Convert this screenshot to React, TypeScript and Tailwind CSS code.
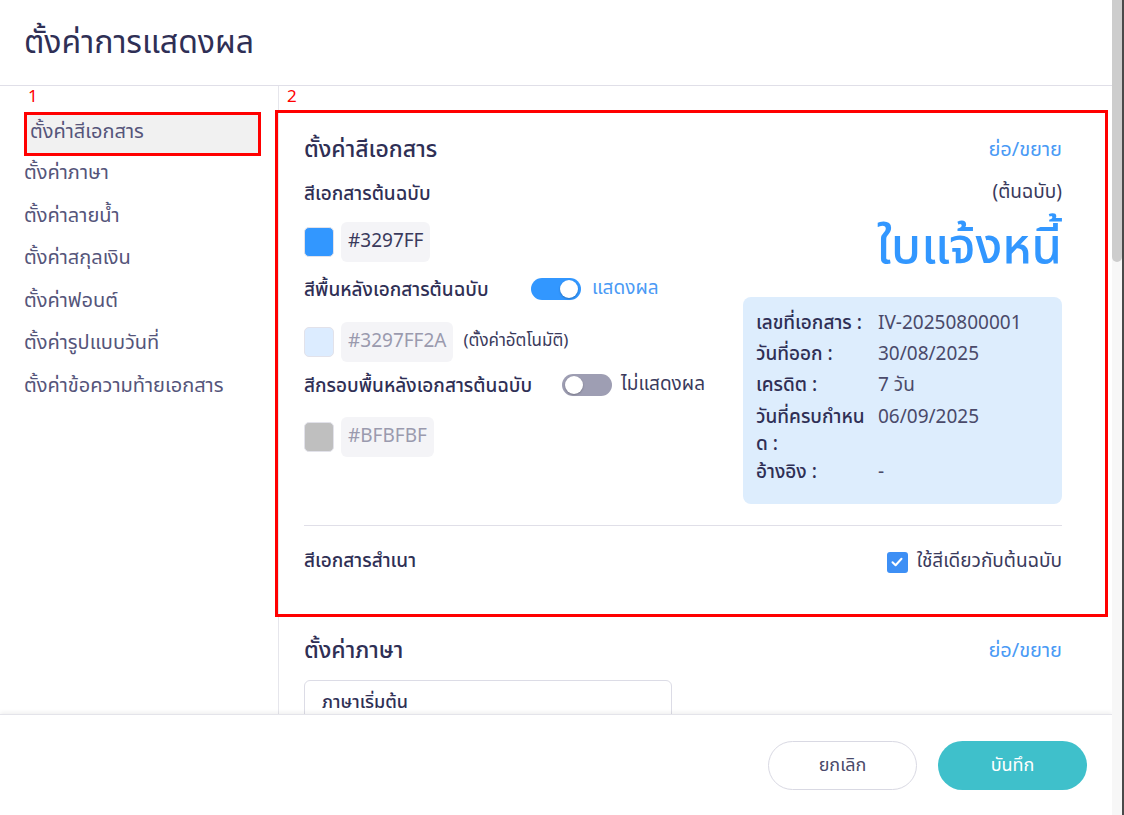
import React from "react";

const font = { fontFamily: '"Noto Sans Thai", "Noto Sans", "Liberation Sans", sans-serif' };

function Toggle({ on }: { on: boolean }) {
  return (
    <div
      className={`relative h-[22px] w-[50px] shrink-0 rounded-full ${on ? "bg-[#3297FF]" : "bg-[#9e9eb3]"}`}
    >
      <div
        className={`absolute top-[2px] h-[18px] w-[18px] rounded-full bg-white shadow-[0_1px_2px_rgba(0,0,0,0.25)] ${
          on ? "right-[3px]" : "left-[3px]"
        }`}
      />
    </div>
  );
}

function HexRow({
  color,
  hex,
  muted,
  extra,
}: {
  color: string;
  hex: string;
  muted?: boolean;
  extra?: string;
}) {
  return (
    <div className="flex items-center">
      <div
        className="h-[30px] w-[30px] rounded-[5px] border border-[#e2e2ea]"
        style={{ backgroundColor: color }}
      />
      <div
        className={`ml-[7px] flex h-[40px] items-center rounded-[6px] bg-[#f4f4f7] px-[7px] text-[19px] ${
          muted ? "text-[#9a9aae]" : "text-[#3a3a5c]"
        }`}
      >
        {hex}
      </div>
      {extra && <div className="ml-[10px] text-[17px] text-[#3a3a5c]">{extra}</div>}
    </div>
  );
}

export default function App() {
  const sideItems = [
    "ตั้งค่าภาษา",
    "ตั้งค่าลายน้ำ",
    "ตั้งค่าสกุลเงิน",
    "ตั้งค่าฟอนต์",
    "ตั้งค่ารูปแบบวันที่",
    "ตั้งค่าข้อความท้ายเอกสาร",
  ];
  return (
    <div className="relative flex h-[815px] w-[1124px] overflow-hidden bg-white" style={font}>
      {/* dialog */}
      <div className="relative flex h-full w-[1112px] flex-col">
        <div className="flex h-[86px] shrink-0 items-center border-b border-[#e0dfe8] px-6">
          <h1 className="text-[32px] leading-none text-[#2f2f55]">ตั้งค่าการแสดงผล</h1>
        </div>
        <div className="flex min-h-0 flex-1">
          {/* sidebar */}
          <div className="relative w-[279px] shrink-0 border-r border-[#e6e6ec] pl-6 pt-[26px]">
            <span className="absolute left-[28px] top-[3px] text-[17px] leading-none text-[#ff0000]">1</span>
            <div className="flex h-[44px] w-[237px] items-center border-[3px] border-[#ff0000] bg-[#f1f1f1] pb-[4px] pl-[3px] text-[20px] text-[#55557a]">
              ตั้งค่าสีเอกสาร
            </div>
            <div className="-mt-[4px]">
              {sideItems.map((t) => (
                <div key={t} className="flex h-[42.5px] items-center text-[20px] text-[#55557a]">
                  {t}
                </div>
              ))}
            </div>
          </div>
          {/* content */}
          <div className="relative min-w-0 flex-1 pl-[25px] pr-[50px] pt-[24px]">
            <span className="absolute left-[8px] top-[3px] text-[17px] leading-none text-[#ff0000]">2</span>
            {/* card 1 */}
            <div className="relative pb-[41px] pt-[25px]">
              <div className="pointer-events-none absolute -left-[29px] -right-[46px] bottom-0 top-0 border-[3px] border-[#ff0000]" />
              <div className="flex h-[30px] items-center justify-between">
                <div className="text-[23px] font-medium text-[#2f2f55]">ตั้งค่าสีเอกสาร</div>
                <div className="text-[20px] text-[#4a9af5]">ย่อ/ขยาย</div>
              </div>
              <div className="mt-[13px] flex">
                {/* left col */}
                <div className="flex-1">
                  <div className="flex h-[28px] items-center pt-[6px] text-[19px] font-medium text-[#2f2f55]">
                    สีเอกสารต้นฉบับ
                  </div>
                  <div className="mt-[16px]">
                    <HexRow color="#3297FF" hex="#3297FF" />
                  </div>
                  <div className="mt-[13px] flex h-[28px] items-center">
                    <div className="w-[227px] shrink-0 pt-[4px] text-[19px] font-medium text-[#2f2f55]">
                      สีพื้นหลังเอกสารต้นฉบับ
                    </div>
                    <Toggle on />
                    <div className="ml-[11px] text-[19px] text-[#4a9af5]">แสดงผล</div>
                  </div>
                  <div className="mt-[19px]">
                    <HexRow color="#dcecff" hex="#3297FF2A" muted extra="(ตั้งค่าอัตโนมัติ)" />
                  </div>
                  <div className="mt-[9px] flex h-[28px] items-center">
                    <div className="w-[258px] shrink-0 pt-[4px] text-[19px] font-medium text-[#2f2f55]">
                      สีกรอบพื้นหลังเอกสารต้นฉบับ
                    </div>
                    <Toggle on={false} />
                    <div className="ml-[9px] text-[19px] text-[#3a3a5c]">ไม่แสดงผล</div>
                  </div>
                  <div className="mt-[18px]">
                    <HexRow color="#bfbfbf" hex="#BFBFBF" muted />
                  </div>
                </div>
                {/* right col */}
                <div className="flex w-[319px] flex-col items-end">
                  <div className="flex h-[28px] items-center pt-[2px] text-[19px] text-[#3a3a5c]">(ต้นฉบับ)</div>
                  <div className="mt-[14px] text-[49px] font-medium leading-[56px] text-[#3297FF]">ใบแจ้งหนี้</div>
                  <div className="mt-[21px] w-[319px] rounded-[8px] bg-[#ddedfd] pb-[15px] pl-[13px] pr-3 pt-[12px] text-[19px]">
                    {[
                      ["เลขที่เอกสาร :", "IV-20250800001"],
                      ["วันที่ออก :", "30/08/2025"],
                      ["เครดิต :", "7 วัน"],
                    ].map(([l, v]) => (
                      <div key={l} className="flex h-[31px] items-center">
                        <div className="w-[122px] shrink-0 font-medium text-[#2f2f55]">{l}</div>
                        <div className="text-[#4a4a6a]">{v}</div>
                      </div>
                    ))}
                    <div className="flex leading-[27px]">
                      <div className="w-[122px] shrink-0 pt-[2px] font-medium text-[#2f2f55]">
                        วันที่ครบกำหน
                        <br />ด :
                      </div>
                      <div className="pt-[2px] text-[#4a4a6a]">06/09/2025</div>
                    </div>
                    <div className="flex h-[31px] items-center">
                      <div className="w-[122px] shrink-0 font-medium text-[#2f2f55]">อ้างอิง :</div>
                      <div className="text-[#4a4a6a]">-</div>
                    </div>
                  </div>
                </div>
              </div>
              <div className="mt-[21px] border-t border-[#e0dfe8]" />
              <div className="mt-[22px] flex h-[28px] items-center justify-between">
                <div className="text-[19px] font-medium text-[#2f2f55]">สีเอกสารสำเนา</div>
                <div className="flex items-center">
                  <div className="flex h-[21px] w-[21px] items-center justify-center rounded-[3px] bg-[#3d8ff5]">
                    <svg width="14" height="14" viewBox="0 0 14 14" fill="none">
                      <path d="M2.5 7.2 L5.6 10.2 L11.5 3.8" stroke="white" strokeWidth="2" strokeLinecap="round" strokeLinejoin="round" />
                    </svg>
                  </div>
                  <div className="ml-[9px] text-[19px] text-[#3a3a5c]">ใช้สีเดียวกับต้นฉบับ</div>
                </div>
              </div>
            </div>
            {/* card 2 */}
            <div className="pt-[19px]">
              <div className="flex h-[30px] items-center justify-between">
                <div className="text-[23px] font-medium text-[#2f2f55]">ตั้งค่าภาษา</div>
                <div className="text-[20px] text-[#4a9af5]">ย่อ/ขยาย</div>
              </div>
              <div className="mt-[14px] h-[80px] w-[368px] rounded-[6px] border border-[#dcdce6] px-[17px] pt-[8px]">
                <div className="text-[18px] font-medium text-[#2f2f55]">ภาษาเริ่มต้น</div>
              </div>
            </div>
          </div>
        </div>
        {/* footer */}
        <div className="absolute bottom-0 left-0 right-0 flex h-[101px] items-center justify-end gap-[21px] border-t border-[#e4e4ea] bg-white pr-[25px] shadow-[0_-2px_4px_rgba(0,0,0,0.06)]">
          <button className="h-[49px] w-[149px] rounded-full border border-[#d9d9e3] bg-white text-[18px] text-[#4a4a6a]">
            ยกเลิก
          </button>
          <button className="h-[49px] w-[149px] rounded-full bg-[#3fc0cb] text-[18px] text-white">บันทึก</button>
        </div>
      </div>
      {/* scrollbar */}
      <div className="relative h-full w-[10px] bg-[#f7f7f7]">
        <div className="h-[262px] w-[10px] rounded-b-[5px] bg-[#cdcdcd]" />
      </div>
      <div className="h-full w-[2px] bg-[#4a4a4a]" />
    </div>
  );
}
